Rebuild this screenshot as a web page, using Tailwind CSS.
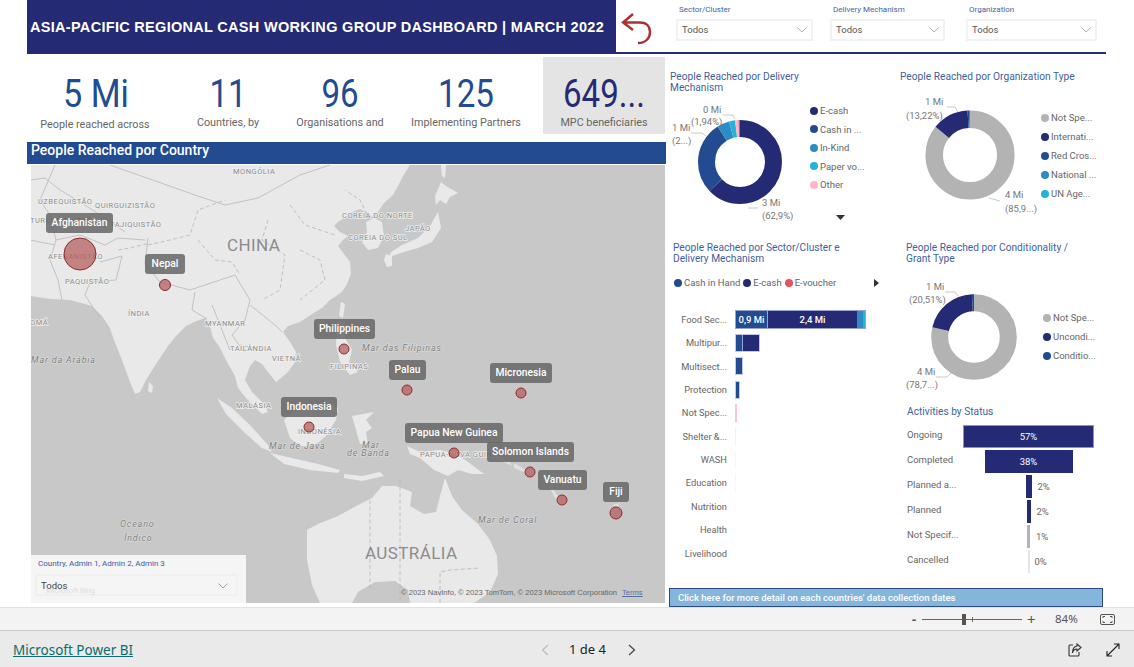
<!DOCTYPE html>
<html lang="pt">
<head>
<meta charset="UTF-8">
<title>Asia-Pacific Regional Cash Working Group Dashboard</title>
<script src="https://cdn.jsdelivr.net/npm/@tailwindcss/browser@4"></script>
</head>
<body class="bg-white overflow-hidden">
<div class="w-[1134px] h-[667px] flex flex-col font-['Roboto',sans-serif] overflow-hidden">

  <!-- report page -->
  <div class="h-[607px] pl-[27px] flex flex-col bg-white">
    <!-- top row -->
    <div class="flex h-[54px] shrink-0">
      <div class="w-[589px] h-[54px] bg-[#252a74] flex items-center pl-[3px] pt-[2px]">
        <h1 class="font-['Liberation_Sans',sans-serif] font-bold text-white text-[14.500px] tracking-[0.300px] whitespace-nowrap">ASIA-PACIFIC REGIONAL CASH WORKING GROUP DASHBOARD | MARCH 2022</h1>
      </div>
      <div class="w-[490px] h-[54px] border-b-2 border-[#252a74] flex">
        <div class="w-[50px] flex items-start">
          <svg class="w-[44px] h-[50px]" viewBox="0 0 44 50" fill="none" stroke="#a8322f" stroke-width="2.400"><path d="M17 14 L7 22.500 L17 30 M7 22.500 L24 22.500 C31 22.500 34 27 34 32 C34 38 30 43 22 43"/></svg>
        </div>
        <div class="w-[152px] pt-[5px]">
          <div class="text-[8px] leading-[9px] text-[#44649f] pl-[13px]">Sector/Cluster</div>
          <div class="ml-[10px] mt-[5px] w-[137px] h-[22px] border-2 border-[#f2f2f2] flex items-center justify-between pl-[4px] pr-[4px] text-[9.500px] text-[#555]">Todos<svg class="w-[10px] h-[6px]" viewBox="0 0 10 6" fill="none" stroke="#8aa0b8" stroke-width="0.8"><path d="M0.500 0.500 L5 5 L9.500 0.500"/></svg></div>
        </div>
        <div class="w-[136px] pt-[5px]">
          <div class="text-[8px] leading-[9px] text-[#44649f] pl-[15px]">Delivery Mechanism</div>
          <div class="ml-[12px] mt-[5px] w-[115px] h-[22px] border-2 border-[#f2f2f2] flex items-center justify-between pl-[4px] pr-[4px] text-[9.500px] text-[#555]">Todos<svg class="w-[10px] h-[6px]" viewBox="0 0 10 6" fill="none" stroke="#8aa0b8" stroke-width="0.8"><path d="M0.500 0.500 L5 5 L9.500 0.500"/></svg></div>
        </div>
        <div class="w-[140px] pt-[5px]">
          <div class="text-[8px] leading-[9px] text-[#44649f] pl-[15px]">Organization</div>
          <div class="ml-[12px] mt-[5px] w-[131px] h-[22px] border-2 border-[#f2f2f2] flex items-center justify-between pl-[4px] pr-[4px] text-[9.500px] text-[#555]">Todos<svg class="w-[10px] h-[6px]" viewBox="0 0 10 6" fill="none" stroke="#8aa0b8" stroke-width="0.8"><path d="M0.500 0.500 L5 5 L9.500 0.500"/></svg></div>
        </div>
      </div>
    </div>

    <div class="flex flex-1 min-h-0">
      <!-- left column: cards + map -->
      <div class="w-[639px] shrink-0">
        <div class="grid grid-cols-[138px_126px_98px_154px_122px] h-[77px] mt-[3px] text-center">
          <div class="pt-[15px]"><div class="text-[38px] leading-[44px] text-[#224b91] scale-x-[.9]">5 Mi</div><div class="text-[10.800px] leading-[14px] mt-[2px] -ml-[2px] text-[#666]">People reached across</div></div>
          <div class="pt-[15px]"><div class="text-[38px] leading-[44px] text-[#224b91] scale-x-[.87]">11</div><div class="text-[10.800px] leading-[14px] text-[#666]">Countries, by</div></div>
          <div class="pt-[15px]"><div class="text-[38px] leading-[44px] text-[#224b91] scale-x-[.87]">96</div><div class="text-[10.800px] leading-[14px] text-[#666] whitespace-nowrap">Organisations and</div></div>
          <div class="pt-[15px]"><div class="text-[38px] leading-[44px] text-[#224b91] scale-x-[.87]">125</div><div class="text-[10.800px] leading-[14px] text-[#666]">Implementing Partners</div></div>
          <div class="pt-[15px] bg-[#e4e4e4]"><div class="text-[38px] leading-[44px] text-[#252a74] scale-x-[.87]">649...</div><div class="text-[10.800px] leading-[14px] text-[#666]">MPC beneficiaries</div></div>
        </div>
        <div class="h-[22px] mt-[8px] bg-[#224b91] text-white text-[14px] font-medium leading-[16px] pl-[4px]">People Reached por Country</div>

        <!-- map -->
        <div class="relative ml-[4px] mt-px w-[634px] h-[438px] bg-[#c8c8c8] overflow-hidden">
          <svg class="absolute inset-0 w-[634px] h-[438px]" viewBox="31 165 634 438" font-family="Roboto, sans-serif">
            <g fill="#e9e9e9">
              <path d="M31 165 L410 165 L403 176 L398 186 L393 195 L384 203 L378 212 L372 217 L366 212 L360 209 L352 212 L344 218 L338 222 L334 226 L340 232 L348 236 L343 240 L338 246 L344 254 L350 262 L351 274 L347 284 L342 292 L330 300 L322 308 L312 314 L300 322 L288 326 L283 332 L290 342 L296 352 L295 362 L288 372 L276 382 L268 372 L262 364 L255 360 L250 366 L245 380 L252 392 L262 402 L268 412 L262 414 L246 398 L238 388 L235 376 L226 360 L219 346 L213 338 L209 322 L205 318 L194 322 L186 326 L176 336 L168 346 L156 364 L146 380 L140 392 L135 394 L130 382 L122 360 L114 340 L110 328 L102 316 L92 306 L70 300 L50 299 L31 296 Z"/>
              <path d="M366 222 L374 218 L382 222 L384 236 L378 248 L368 250 L362 242 L367 232 Z"/>
              <path d="M441 182 L446 186 L458 193 L450 197 L446 204 L440 200 L436 205 L435 196 Z"/>
              <path d="M438 212 L441 228 L432 242 L418 248 L404 252 L392 256 L388 262 L391 252 L402 245 L418 238 L430 226 Z"/>
              <path d="M386 254 L392 256 L392 266 L387 267 L384 260 Z"/>
              <path d="M441 165 L446 165 L445 178 L442 176 Z"/>
              <path d="M341 302 L345 304 L343 318 L339 316 Z"/>
              <path d="M273 342 L279 341 L279 348 L274 349 Z"/>
              <path d="M149 382 L153 386 L152 393 L148 391 Z"/>
              <path d="M337 320 L345 322 L345 338 L352 350 L349 362 L358 372 L350 375 L340 362 L336 345 Z"/>
              <path d="M217 398 L232 408 L250 425 L268 445 L272 452 L262 448 L244 432 L226 414 Z"/>
              <path d="M284 420 L296 408 L312 408 L328 400 L338 408 L336 420 L326 436 L314 446 L300 446 L290 438 Z"/>
              <path d="M352 416 L374 412 L366 420 L372 428 L366 432 L368 444 L360 444 L356 430 Z"/>
              <path d="M270 453 L292 458 L318 464 L340 470 L338 473 L310 470 L284 464 Z"/>
              <path d="M344 474 L362 476 L380 472 L384 476 L362 481 L344 478 Z"/>
              <path d="M407 446 L420 452 L440 450 L456 454 L468 462 L484 474 L472 474 L458 470 L448 476 L434 470 L420 458 L410 454 Z"/>
              <path d="M445 478 L452 496 L462 510 L478 524 L490 540 L497 556 L498 574 L490 592 L474 603 L410 603 L408 590 L395 581 L375 582 L358 592 L352 603 L320 603 L312 585 L307 560 L307 530 L318 524 L338 516 L358 505 L372 498 L382 486 L396 486 L412 492 L410 506 L424 514 L436 512 L440 496 Z"/>
            </g>
            <g fill="#e0e0e0">
              <path d="M549 487 L558 503 L560 500 L551 485 Z"/>
              <path d="M612 505 L620 503 L618 507 Z"/>
              <path d="M492 452 L510 462 L512 466 L496 458 Z"/>
              <path d="M514 463 L526 470 L526 473 L514 468 Z"/>
            </g>
            <g fill="none" stroke="#bdbdbd" stroke-width="0.9">
              <path d="M30 180 L45 178 L60 190 L85 205 L100 215 L115 225 L125 232"/>
              <path d="M55 165 L40 200 L50 215 L56 240 L50 260 L58 280 L62 300"/>
              <path d="M110 165 L195 195 L225 205 L258 198 L300 175 L330 165"/>
              <path d="M100 262 L122 256 L116 280 L90 282 L85 295 L100 318 M148 238 L145 264 L160 282 L190 290 L205 285 L235 275 L250 300 L245 320 L232 335 L244 352 M195 292 L192 310 L207 319 M212 305 L222 330 L230 350 M250 305 L275 325 L282 332 M240 345 L262 350"/>
              <path d="M56 240 L80 235 L105 245 L118 238 L145 240 M30 240 L55 245"/>
            </g>
            <g fill="none" stroke="#b5b5b5" stroke-width="0.8" stroke-dasharray="4 2.500">
              <path d="M148 245 L170 240 L190 235 L198 210 L225 200 M198 240 L215 260 L232 262 L240 275 M268 220 L262 240 L285 255 L280 290 L262 300 M290 205 L305 225 L335 235 M300 250 L320 260 L325 280 L300 300 M118 250 L130 248 L150 243"/>
              <path d="M370 220 L360 200 L345 190 M400 480 L400 603 M370 500 L370 590 M440 603 L440 572 L450 570 L480 568"/>
            </g>
            <g fill="#8a8a8a" font-size="7.500" letter-spacing="0.500" stroke="#f0f0f0" stroke-width="1.500" paint-order="stroke">
              <text x="233" y="174">MONGÓLIA</text><text x="38" y="204">UZBEQUISTÃO</text><text x="95" y="208">QUIRGUIZISTÃO</text><text x="30" y="223">TURCOMENISTÃO</text><text x="110" y="227">TAJIQUISTÃO</text>
              <text x="48" y="259">AFEGANISTÃO</text><text x="65" y="284">PAQUISTÃO</text><text x="128" y="316">ÍNDIA</text><text x="205" y="326">MYANMAR</text><text x="230" y="351">TAILÂNDIA</text><text x="272" y="361">VIETNÃ</text>
              <text x="30" y="325">OMÃ</text><text x="330" y="369">FILIPINAS</text><text x="342" y="218">COREIA DO NORTE</text><text x="348" y="240">COREIA DO SUL</text><text x="405" y="231">JAPÃO</text>
              <text x="236" y="408">MALÁSIA</text><text x="298" y="434">INDONÉSIA</text><text x="420" y="457">PAPUA-NOVA GUINÉ</text>
            </g>
            <g fill="#8c8c8c" font-size="17" letter-spacing="0.400"><text x="227" y="251">CHINA</text><text x="365" y="559">AUSTRÁLIA</text></g>
            <g fill="#7f7f7f" font-size="9" font-style="italic" letter-spacing="0.800" stroke="#dedede" stroke-width="1.200" paint-order="stroke">
              <text x="31" y="363">Mar da Arábia</text><text x="362" y="351">Mar das Filipinas</text><text x="269" y="449">Mar de Java</text>
              <text x="120" y="527">Oceano</text><text x="124" y="541">Índico</text><text x="362" y="448">Mar</text><text x="347" y="456">de Banda</text><text x="478" y="523">Mar de Coral</text>
            </g>
            <g fill="#b4605f" fill-opacity="0.75" stroke="#8e2a2e" stroke-width="1">
              <circle cx="80" cy="254" r="16"/><circle cx="165" cy="285" r="5.500"/><circle cx="344" cy="349" r="5"/><circle cx="407" cy="390" r="5"/><circle cx="521" cy="393" r="5"/><circle cx="309" cy="427" r="5"/><circle cx="454" cy="453" r="5"/><circle cx="530" cy="472" r="5"/><circle cx="562" cy="500" r="5"/><circle cx="616" cy="513" r="6"/>
            </g>
          </svg>

          <!-- map bubble labels -->
          <div class="absolute left-[15px] top-[48px] w-[67px] h-[20px] rounded-[3px] bg-[#666]/85 text-white text-[10.300px] font-medium leading-[20px] text-center">Afghanistan</div>
          <div class="absolute left-[114px] top-[89px] w-[40px] h-[20px] rounded-[3px] bg-[#666]/85 text-white text-[10.300px] font-medium leading-[20px] text-center">Nepal</div>
          <div class="absolute left-[283px] top-[154px] w-[61px] h-[20px] rounded-[3px] bg-[#666]/85 text-white text-[10.300px] font-medium leading-[20px] text-center">Philippines</div>
          <div class="absolute left-[358px] top-[195px] w-[37px] h-[20px] rounded-[3px] bg-[#666]/85 text-white text-[10.300px] font-medium leading-[20px] text-center">Palau</div>
          <div class="absolute left-[459px] top-[198px] w-[62px] h-[20px] rounded-[3px] bg-[#666]/85 text-white text-[10.300px] font-medium leading-[20px] text-center">Micronesia</div>
          <div class="absolute left-[250px] top-[232px] w-[56px] h-[20px] rounded-[3px] bg-[#666]/85 text-white text-[10.300px] font-medium leading-[20px] text-center">Indonesia</div>
          <div class="absolute left-[374px] top-[258px] w-[98px] h-[20px] rounded-[3px] bg-[#666]/85 text-white text-[10.300px] font-medium leading-[20px] text-center">Papua New Guinea</div>
          <div class="absolute left-[456px] top-[277px] w-[87px] h-[20px] rounded-[3px] bg-[#666]/85 text-white text-[10.300px] font-medium leading-[20px] text-center">Solomon Islands</div>
          <div class="absolute left-[507px] top-[305px] w-[49px] h-[20px] rounded-[3px] bg-[#666]/85 text-white text-[10.300px] font-medium leading-[20px] text-center">Vanuatu</div>
          <div class="absolute left-[572px] top-[317px] w-[26px] h-[20px] rounded-[3px] bg-[#666]/85 text-white text-[10.300px] font-medium leading-[20px] text-center">Fiji</div>

          <div class="absolute left-[370px] top-[423px] text-[7.600px] leading-[10px] text-[#666] whitespace-nowrap font-['Liberation_Sans',sans-serif]">© 2023 NavInfo, © 2023 TomTom, © 2023 Microsoft Corporation <a class="ml-[3px] text-[#5a6fa8] underline">Terms</a></div>

          <!-- country slicer -->
          <div class="absolute left-0 bottom-0 w-[215px] h-[48px] bg-[#f5f5f5] pl-[4px] pt-[4px]">
            <div class="text-[8px] leading-[10px] pl-[3px] text-[#3a5a9e] whitespace-nowrap">Country, Admin 1, Admin 2, Admin 3</div>
            <div class="relative mt-[5px] w-[203px] h-[22px] border-2 border-[#f0f0f0] flex items-center justify-between pl-[4px] pr-[8px] pt-[2px] text-[9.500px] text-[#444]">Todos<svg class="w-[10px] h-[6px]" viewBox="0 0 10 6" fill="none" stroke="#888" stroke-width="0.8"><path d="M0.500 0.500 L5 5 L9.500 0.500"/></svg><span class="absolute left-[9px] top-[9px] text-[7.500px] text-[#dcdcdc]">Microsoft Bing</span></div>
          </div>
        </div>
      </div>

      <!-- right column: charts -->
      <div class="relative w-[468px] shrink-0">
        <div class="flex h-[534px]">
          <div class="w-[233px] pl-[4px]">
            <div class="relative h-[188px]">
              <div class="pt-[17px] text-[10.200px] leading-[11px] text-[#3f5f9f]">People Reached por Delivery<br>Mechanism</div>
              <svg class="absolute left-[-3px] top-0 w-[233px] h-[193px]" viewBox="667 54 233 193" font-family="Roboto, sans-serif" font-size="9.500" fill="#777">
                <g fill="none" stroke-width="17" transform="rotate(-90 740 162)">
                  <circle cx="740" cy="162" r="33.500" pathLength="100" stroke="#252a74" stroke-dasharray="62.900 100"/>
                  <circle cx="740" cy="162" r="33.500" pathLength="100" stroke="#224b91" stroke-dasharray="28.200 100" stroke-dashoffset="-62.900"/>
                  <circle cx="740" cy="162" r="33.500" pathLength="100" stroke="#2e8bc6" stroke-dasharray="4.700 100" stroke-dashoffset="-91.100"/>
                  <circle cx="740" cy="162" r="33.500" pathLength="100" stroke="#22b3d6" stroke-dasharray="2.300 100" stroke-dashoffset="-95.800"/>
                  <circle cx="740" cy="162" r="33.500" pathLength="100" stroke="#ffb6c8" stroke-dasharray="1.300 100" stroke-dashoffset="-98.100"/>
                  <circle cx="740" cy="162" r="33.500" pathLength="100" stroke="#e8505b" stroke-dasharray="0.600 100" stroke-dashoffset="-99.400"/>
                </g>
                <path d="M723 115 L733 115 L735 119 M691 133 L702 133 L706 136 M748 208 L758 208" fill="none" stroke="#bbb" stroke-width="0.800"/>
                <text x="703" y="113">0 Mi</text><text x="691" y="125">(1,94%)</text><text x="672" y="131">1 Mi</text><text x="672" y="144">(2...)</text><text x="762" y="206">3 Mi</text><text x="762" y="219">(62,9%)</text>
                <path d="M836 215 L845 215 L840.500 220 Z" fill="#333"/>
              </svg>
              <div class="absolute left-[140px] top-[50px] w-[70px] flex flex-col gap-[5.500px] text-[9.500px] leading-[13px] text-[#666]">
                <div class="flex items-center gap-[2px]"><span class="w-[8px] h-[8px] rounded-full bg-[#252a74]"></span>E-cash</div>
                <div class="flex items-center gap-[2px]"><span class="w-[8px] h-[8px] rounded-full bg-[#224b91]"></span>Cash in ...</div>
                <div class="flex items-center gap-[2px]"><span class="w-[8px] h-[8px] rounded-full bg-[#2e8bc6]"></span>In-Kind</div>
                <div class="flex items-center gap-[2px]"><span class="w-[8px] h-[8px] rounded-full bg-[#22b3d6]"></span>Paper vo...</div>
                <div class="flex items-center gap-[2px]"><span class="w-[8px] h-[8px] rounded-full bg-[#ffb6c8]"></span>Other</div>
              </div>
            </div>

            <!-- sector bars -->
            <div class="pl-[3px]">
              <div class="text-[10.200px] leading-[11px] text-[#3f5f9f] h-[22px]">People Reached por Sector/Cluster e<br>Delivery Mechanism</div>
              <div class="flex items-center mt-[12px] h-[14px] text-[9.500px] text-[#666] pl-[1px]">
                <span class="w-[8px] h-[8px] rounded-full bg-[#224b91] mr-[2px]"></span>Cash in Hand
                <span class="w-[8px] h-[8px] rounded-full bg-[#252a74] ml-[3px] mr-[2px]"></span>E-cash
                <span class="w-[8px] h-[8px] rounded-full bg-[#e8505b] ml-[3px] mr-[2px]"></span>E-voucher
                <svg class="ml-[38px] w-[5px] h-[8px]" viewBox="0 0 5 8"><path d="M0 0 L5 4 L0 8 Z" fill="#333"/></svg>
              </div>
              <div class="mt-[18px] flex flex-col text-[9.300px] text-[#666]">
                <div class="h-[23.400px] flex items-center"><div class="w-[54px] text-right whitespace-nowrap">Food Sec...</div><div class="ml-[8px] w-[131px] h-[19px] flex border border-[#9aa3cf] text-white text-[9.500px] font-medium"><div class="w-[32px] bg-[#224b91] border-r border-[#9aa3cf] text-center leading-[17px]">0,9 Mi</div><div class="w-[89px] bg-[#252a74] text-center leading-[17px]">2,4 Mi</div><div class="w-[6px] bg-[#2e8bc6]"></div><div class="w-[2px] bg-[#22b3d6]"></div></div></div>
                <div class="h-[23.400px] flex items-center"><div class="w-[54px] text-right whitespace-nowrap">Multipur...</div><div class="ml-[8px] h-[18px] flex border border-[#c3c9e3]"><div class="w-[7px] bg-[#224b91] border-r border-[#9aa3cf]"></div><div class="w-[16px] bg-[#252a74]"></div></div></div>
                <div class="h-[23.400px] flex items-center"><div class="w-[54px] text-right whitespace-nowrap">Multisect...</div><div class="ml-[8px] h-[18px] flex border border-[#c3c9e3]"><div class="w-[6px] bg-[#224b91]"></div></div></div>
                <div class="h-[23.400px] flex items-center"><div class="w-[54px] text-right whitespace-nowrap">Protection</div><div class="ml-[8px] h-[18px] flex border border-[#c3c9e3]"><div class="w-[3px] bg-[#224b91]"></div></div></div>
                <div class="h-[23.400px] flex items-center"><div class="w-[54px] text-right whitespace-nowrap">Not Spec...</div><div class="ml-[8px] h-[18px] w-[2px] bg-[#ffc4d2]"></div></div>
                <div class="h-[23.400px] flex items-center"><div class="w-[54px] text-right whitespace-nowrap">Shelter &amp;...</div><div class="ml-[8px] h-[18px] w-[1px] bg-[#f2f2f6]"></div></div>
                <div class="h-[23.400px] flex items-center"><div class="w-[54px] text-right whitespace-nowrap">WASH</div><div class="ml-[8px] h-[18px] w-[1px] bg-[#f6f6f8]"></div></div>
                <div class="h-[23.400px] flex items-center"><div class="w-[54px] text-right whitespace-nowrap">Education</div><div class="ml-[8px] h-[18px] w-[1px] bg-[#f6f6f8]"></div></div>
                <div class="h-[23.400px] flex items-center"><div class="w-[54px] text-right whitespace-nowrap">Nutrition</div></div>
                <div class="h-[23.400px] flex items-center"><div class="w-[54px] text-right whitespace-nowrap">Health</div></div>
                <div class="h-[23.400px] flex items-center"><div class="w-[54px] text-right whitespace-nowrap">Livelihood</div></div>
              </div>
            </div>
          </div>

          <div class="w-[235px]">
            <div class="relative h-[188px]">
              <div class="pt-[17px] pl-px text-[10.200px] leading-[11px] text-[#3f5f9f] whitespace-nowrap">People Reached por Organization Type</div>
              <svg class="absolute left-px top-0 w-[235px] h-[193px]" viewBox="900 54 235 193" font-family="Roboto, sans-serif" font-size="9.500" fill="#777">
                <g fill="none" stroke-width="17.500" transform="rotate(-90 970 155)">
                  <circle cx="970" cy="155" r="35.800" pathLength="100" stroke="#b3b3b3" stroke-dasharray="85.900 100"/>
                  <circle cx="970" cy="155" r="35.800" pathLength="100" stroke="#252a74" stroke-dasharray="13.200 100" stroke-dashoffset="-85.900"/>
                  <circle cx="970" cy="155" r="35.800" pathLength="100" stroke="#224b91" stroke-dasharray="0.500 100" stroke-dashoffset="-99.100"/>
                  <circle cx="970" cy="155" r="35.800" pathLength="100" stroke="#2e8bc6" stroke-dasharray="0.400 100" stroke-dashoffset="-99.600"/>
                </g>
                <path d="M947 107 L955 107 L958 112 M989 198 L1000 201" fill="none" stroke="#bbb" stroke-width="0.800"/>
                <text x="925" y="105">1 Mi</text><text x="906" y="119">(13,22%)</text><text x="1005" y="198">4 Mi</text><text x="1005" y="212">(85,9...)</text>
              </svg>
              <div class="absolute left-[142px] top-[57px] w-[70px] flex flex-col gap-[6px] text-[9.500px] leading-[13px] text-[#666] whitespace-nowrap">
                <div class="flex items-center"><span class="w-[8px] h-[8px] rounded-full bg-[#b3b3b3] mr-[2px]"></span>Not Spe...</div>
                <div class="flex items-center"><span class="w-[8px] h-[8px] rounded-full bg-[#252a74] mr-[2px]"></span>Internati...</div>
                <div class="flex items-center"><span class="w-[8px] h-[8px] rounded-full bg-[#224b91] mr-[2px]"></span>Red Cros...</div>
                <div class="flex items-center"><span class="w-[8px] h-[8px] rounded-full bg-[#2e8bc6] mr-[2px]"></span>National ...</div>
                <div class="flex items-center"><span class="w-[8px] h-[8px] rounded-full bg-[#22b3d6] mr-[2px]"></span>UN Age...</div>
              </div>
            </div>

            <div class="relative h-[163px]">
              <div class="pl-[7px] text-[10.200px] leading-[11px] text-[#3f5f9f]">People Reached por Conditionality /<br>Grant Type</div>
              <svg class="absolute left-px top-0 w-[235px] h-[163px]" viewBox="900 242 235 163" font-family="Roboto, sans-serif" font-size="9.500" fill="#777">
                <g fill="none" stroke-width="17" transform="rotate(-90 974 337)">
                  <circle cx="974" cy="337" r="34.300" pathLength="100" stroke="#b3b3b3" stroke-dasharray="78.700 100"/>
                  <circle cx="974" cy="337" r="34.300" pathLength="100" stroke="#252a74" stroke-dasharray="20.500 100" stroke-dashoffset="-78.700"/>
                  <circle cx="974" cy="337" r="34.300" pathLength="100" stroke="#224b91" stroke-dasharray="0.800 100" stroke-dashoffset="-99.200"/>
                </g>
                <path d="M945 292 L955 292 L958 296 M936 377 L947 377 L951 373" fill="none" stroke="#bbb" stroke-width="0.800"/>
                <text x="926" y="290">1 Mi</text><text x="909" y="303">(20,51%)</text><text x="917" y="375">4 Mi</text><text x="906" y="388">(78,7...)</text>
              </svg>
              <div class="absolute left-[144px] top-[69px] w-[70px] flex flex-col gap-[6px] text-[9.500px] leading-[13px] text-[#666] whitespace-nowrap">
                <div class="flex items-center"><span class="w-[8px] h-[8px] rounded-full bg-[#b3b3b3] mr-[2px]"></span>Not Spe...</div>
                <div class="flex items-center"><span class="w-[8px] h-[8px] rounded-full bg-[#252a74] mr-[2px]"></span>Uncondi...</div>
                <div class="flex items-center"><span class="w-[8px] h-[8px] rounded-full bg-[#224b91] mr-[2px]"></span>Conditio...</div>
              </div>
            </div>

            <!-- funnel -->
            <div class="pl-[8px]">
              <div class="text-[10.200px] leading-[12px] text-[#3f5f9f] pt-[1px]">Activities by Status</div>
              <div class="mt-[6px] flex flex-col text-[9.500px] text-[#666]">
                <div class="h-[25px] flex items-center"><div class="w-[56px] whitespace-nowrap -mt-[3px]">Ongoing</div><div class="w-[131px] flex justify-center"><div class="w-[131px] h-[23px] bg-[#252a74] border border-[#8e93c4] text-white text-center leading-[21px]">57%</div></div></div>
                <div class="h-[25px] flex items-center"><div class="w-[56px] whitespace-nowrap -mt-[3px]">Completed</div><div class="w-[131px] flex justify-center"><div class="w-[88px] h-[23px] bg-[#252a74] text-white text-center leading-[23px]">38%</div></div></div>
                <div class="h-[25px] flex items-center"><div class="w-[56px] whitespace-nowrap -mt-[3px]">Planned a...</div><div class="w-[131px] flex justify-center"><div class="relative w-[6px] h-[23px] bg-[#252a74]"><span class="absolute left-[12px] top-[5px]">2%</span></div></div></div>
                <div class="h-[25px] flex items-center"><div class="w-[56px] whitespace-nowrap -mt-[3px]">Planned</div><div class="w-[131px] flex justify-center"><div class="relative w-[4px] h-[23px] bg-[#252a74]"><span class="absolute left-[10px] top-[5px]">2%</span></div></div></div>
                <div class="h-[25px] flex items-center"><div class="w-[56px] whitespace-nowrap -mt-[3px]">Not Specif...</div><div class="w-[131px] flex justify-center"><div class="relative w-[3px] h-[23px] bg-[#b3b3b3]"><span class="absolute left-[9px] top-[5px]">1%</span></div></div></div>
                <div class="h-[25px] flex items-center"><div class="w-[56px] whitespace-nowrap -mt-[3px]">Cancelled</div><div class="w-[131px] flex justify-center"><div class="relative w-[2px] h-[23px] bg-[#e4e4ee]"><span class="absolute left-[7px] top-[5px]">0%</span></div></div></div>
              </div>
            </div>
          </div>
        </div>
        <div class="ml-[3px] mt-0 w-[434px] h-[19px] bg-[#83b6da] border border-[#2a4a8a] text-white text-[9.500px] font-medium leading-[17px] pl-[8px] absolute bottom-0">Click here for more detail on each countries' data collection dates</div>
      </div>
    </div>
  </div>

  <!-- zoom bar -->
  <div class="h-[24px] bg-[#f3f3f3] border-t border-b border-t-[#e2e2e2] border-b-[#c8c8c8] flex items-center text-[#555] shrink-0 font-['Noto_Sans',sans-serif]">
    <span class="ml-[912px] w-[10px] text-[13px] leading-none font-bold">-</span>
    <div class="relative w-[100px] h-[1px] bg-[#666]">
      <span class="absolute left-[40px] -top-[5px] w-[4px] h-[11px] bg-[#555]"></span>
      <span class="absolute left-[50px] -top-[2px] w-[1px] h-[5px] bg-[#666]"></span>
    </div>
    <span class="ml-[5px] w-[12px] text-[15px] leading-none">+</span>
    <span class="ml-[16px] w-[24px] text-[11.500px]">84%</span>
    <svg class="ml-[21px] w-[15px] h-[11px]" viewBox="0 0 15 11" fill="none" stroke="#555" stroke-width="1"><rect x="0.500" y="0.500" width="14" height="10" rx="1.500"/><path d="M3 4 V2.500 H5 M10 2.500 H12 V4 M12 7 V8.500 H10 M5 8.500 H3 V7"/></svg>
  </div>

  <!-- footer -->
  <div class="h-[36px] bg-[#eaeaea] flex items-center pt-[2px] shrink-0 font-['Noto_Sans',sans-serif]">
    <a class="ml-[13px] w-[122px] text-[13.500px] text-[#0f6b68] underline whitespace-nowrap">Microsoft Power BI</a>
    <svg class="ml-[406px] w-[8px] h-[12px]" viewBox="0 0 8 12" fill="none" stroke="#bdbdbd" stroke-width="1.200"><path d="M7 1 L1.500 6 L7 11"/></svg>
    <span class="ml-[20px] w-[45px] text-[13px] text-[#222] whitespace-nowrap">1 de 4</span>
    <svg class="ml-[14px] w-[8px] h-[12px]" viewBox="0 0 8 12" fill="none" stroke="#444" stroke-width="1.200"><path d="M1 1 L6.500 6 L1 11"/></svg>
    <svg class="ml-[432px] w-[14px] h-[14px]" viewBox="0 0 14 14" fill="none" stroke="#333" stroke-width="1.100"><path d="M5 2 H2 Q1 2 1 3 V12 Q1 13 2 13 H10 Q11 13 11 12 V9"/><path d="M9 1 L13 4.500 L9 8 V6 C6.500 6 5 7.500 4.500 10 C4.500 6.500 6 3.500 9 3 Z"/></svg>
    <svg class="ml-[24px] w-[14px] h-[14px]" viewBox="0 0 14 14" fill="none" stroke="#222" stroke-width="1.100"><path d="M1 13 L13 1 M8 1 H13 V6 M1 8 V13 H6"/></svg>
  </div>
</div>
</body>
</html>
